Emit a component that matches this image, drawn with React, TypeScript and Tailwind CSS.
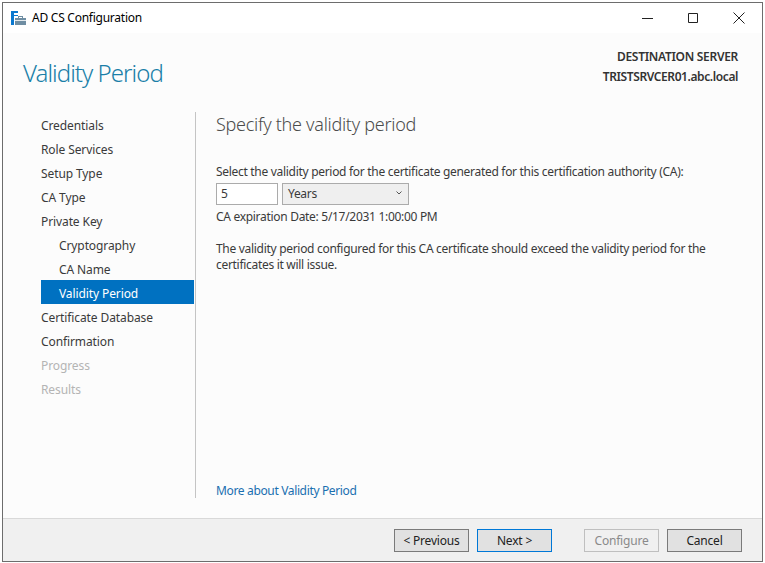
const steps = [
  { label: "Credentials" },
  { label: "Role Services" },
  { label: "Setup Type" },
  { label: "CA Type" },
  { label: "Private Key" },
  { label: "Cryptography", sub: true },
  { label: "CA Name", sub: true },
  { label: "Validity Period", sub: true, active: true },
  { label: "Certificate Database" },
  { label: "Confirmation" },
  { label: "Progress", disabled: true },
  { label: "Results", disabled: true },
];

function AppIcon() {
  return (
    <svg width="16" height="15" viewBox="0 0 16 15" className="mr-[5px]">
      <path d="M0 0h7v2H3v2h4v1H3v9H0z" fill="#0a78cf" />
      <path d="M4 7h11v7H4z" fill="#6f8ea3" />
      <path d="M4 9h11v1H4z" fill="#e4eaee" />
      <path d="M7 5h5v2h-1V6H8v1H7z" fill="#6f8ea3" />
    </svg>
  );
}

function FooterButton({
  label,
  focused,
  disabled,
}: {
  label: string;
  focused?: boolean;
  disabled?: boolean;
}) {
  let cls = "border-[#7a7a7a] bg-[#e1e1e1] text-[#222222]";
  if (focused) cls = "border-[#0078d7] bg-[#e1e1e1] text-[#222222]";
  if (disabled) cls = "border-[#bfbfbf] bg-[#f0f0f0] text-[#8a8a8a]";
  return (
    <button
      type="button"
      className={"w-[75px] h-[23px] border text-[12px] leading-none tracking-[-0.2px] " + cls}
    >
      {label}
    </button>
  );
}

export default function App() {
  return (
    <div
      className="w-[765px] h-[563px] bg-white p-[2px] text-[12px] text-[#3a3a3a]"
      style={{ fontFamily: '"Noto Sans", "Open Sans", sans-serif' }}
    >
      <div className="w-[761px] h-[560px] border border-[#6d6d6d] flex flex-col">
        {/* title bar */}
        <div className="h-[30px] bg-white flex items-center pl-[8px] shrink-0">
          <AppIcon />
          <span className="text-[12px] text-black tracking-[-0.25px]">AD CS Configuration</span>
          <div className="ml-auto flex items-center gap-[30px] pr-[15px]">
            <svg width="16" height="16" viewBox="0 0 16 16" fill="none" stroke="#222222">
              <path d="M3 8.5h11" />
            </svg>
            <svg width="16" height="16" viewBox="0 0 16 16" fill="none" stroke="#222222">
              <path d="M3.5 3.5h9v9h-9z" />
            </svg>
            <svg width="16" height="16" viewBox="0 0 16 16" fill="none" stroke="#222222">
              <path d="M2.5 2.5l11 11M13.5 2.5l-11 11" />
            </svg>
          </div>
        </div>

        <div className="flex-1 bg-[#fcfcfc] flex flex-col min-h-0">
          {/* header */}
          <div className="h-[79px] shrink-0 flex justify-between pl-[20px] pr-[24px]">
            <div className="pt-[22px] text-[24px] leading-[36px] font-light text-[#1a7fa8] tracking-[-0.95px]">
              Validity Period
            </div>
            <div className="pt-[14px] text-right font-semibold leading-[20px] text-[#333333] tracking-[-0.4px]">
              <div className="tracking-[-0.3px]">DESTINATION SERVER</div>
              <div>TRISTSRVCER01.abc.local</div>
            </div>
          </div>

          {/* body */}
          <div className="flex-1 flex min-h-0 pl-[38px]">
            <div className="w-[154px] h-[386px] border-r border-[#c4c4c4] shrink-0 box-content">
              {steps.map((s) => (
                <div
                  key={s.label}
                  className={
                    "h-[24px] leading-[28px] tracking-[-0.1px] w-[153px] " +
                    (s.sub ? "pl-[18px] " : "") +
                    (s.active ? "bg-[#0071c1] text-white " : "") +
                    (s.disabled ? "text-[#b4b4b4] " : "")
                  }
                >
                  {s.label}
                </div>
              ))}
            </div>

            <div className="flex-1 pl-[20px] pr-[20px] flex flex-col h-[387px] tracking-[-0.3px]">
              <h1 className="text-[18px] leading-[24px] font-light text-[#4c4c4c] tracking-[-0.28px]">
                Specify the validity period
              </h1>
              <p className="mt-[27px] leading-[18px]">
                Select the validity period for the certificate generated for this certification authority (CA):
              </p>
              <div className="flex gap-[4px] mt-[2px]">
                <div className="w-[62px] h-[22px] border border-[#ababab] bg-white pl-[4px] leading-[20px]">5</div>
                <div className="w-[127px] h-[22px] border border-[#ababab] bg-[#efefef] pl-[5px] leading-[20px] flex items-center justify-between pr-[6px]">
                  <span>Years</span>
                  <svg width="6" height="4" viewBox="0 0 6 4" fill="none" stroke="#555555" className="-translate-y-[1px]">
                    <path d="M0.5 0.5l2.5 2.5 2.5-2.5" />
                  </svg>
                </div>
              </div>
              <p className="mt-[3px] leading-[18px]">CA expiration Date: 5/17/2031 1:00:00 PM</p>
              <p className="mt-[15px] leading-[16px]">
                The validity period configured for this CA certificate should exceed the validity period for the
                <br />
                certificates it will issue.
              </p>
              <a className="mt-auto leading-[16px] text-[#1a6fb0] tracking-[-0.35px]">More about Validity Period</a>
            </div>
          </div>

          {/* footer */}
          <div className="h-[43px] shrink-0 border-t border-[#d9d9d9] bg-[#f0f0f0] flex items-start justify-end pt-[10px] pr-[20px]">
            <FooterButton label="< Previous" />
            <div className="ml-[8px]">
              <FooterButton label="Next >" focused />
            </div>
            <div className="ml-[32px]">
              <FooterButton label="Configure" disabled />
            </div>
            <div className="ml-[8px]">
              <FooterButton label="Cancel" />
            </div>
          </div>
        </div>
      </div>
    </div>
  );
}
